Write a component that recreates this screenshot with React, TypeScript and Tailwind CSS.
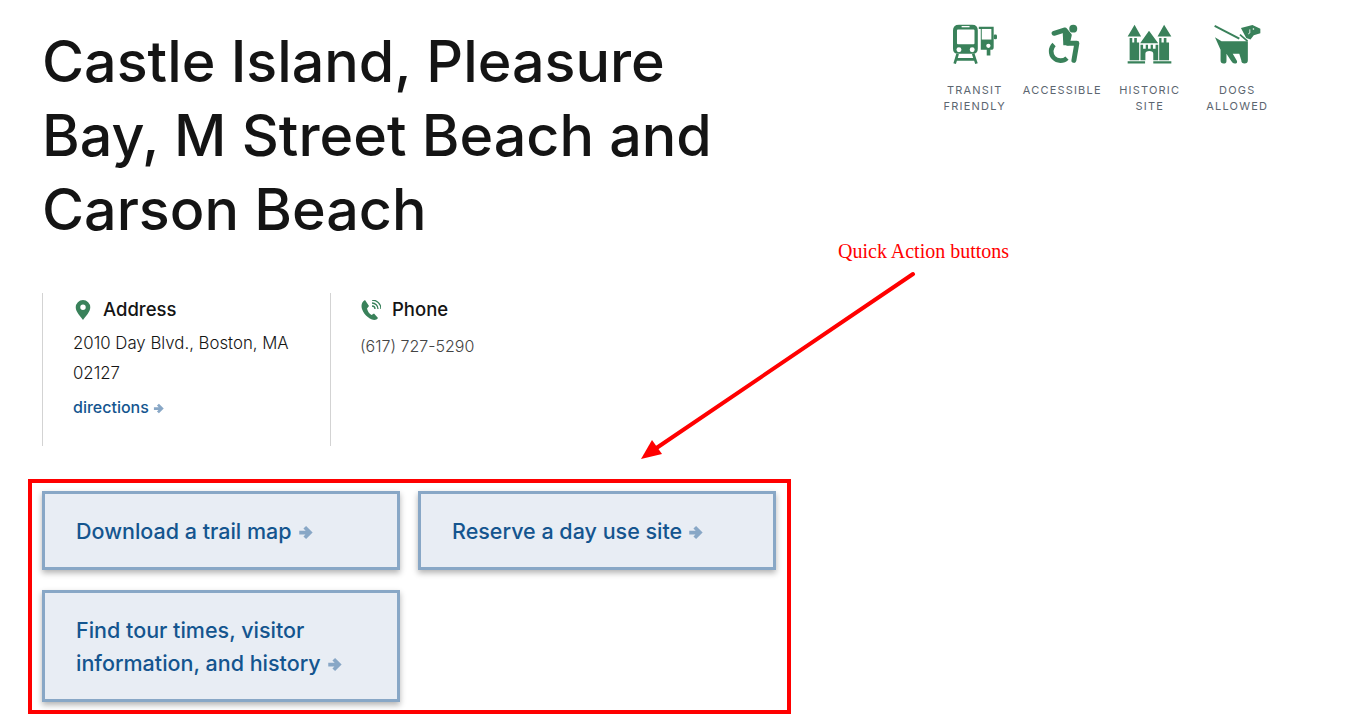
import React from "react";

const Arrow = ({ className = "" }: { className?: string }) => (
  <svg viewBox="0 0 12 12" className={className} aria-hidden="true">
    <path d="M1 6h8M5.400 1.800 9.600 6l-4.200 4.200" fill="none" stroke="#88a7c6" strokeWidth="3" />
  </svg>
);

const Transit = () => (
  <svg viewBox="65 40 140 124" className="w-[47px] h-[41px]" fill="#39815a" aria-hidden="true">
    <path fillRule="evenodd" d="M88 42h40q17 0 17 17v56q0 15-15 15H85q-15 0-15-15V59q0-17 18-17ZM82 60v38q0 3 3 3h47q3 0 3-3V60q0-3-3-3H85q-3 0-3 3Z" />
    <rect x="96" y="46" width="24" height="4" fill="#fff" />
    <circle cx="88" cy="118" r="7.5" fill="#fff" />
    <circle cx="128" cy="118" r="7.5" fill="#fff" />
    <path d="M84 130 75 160M131 130l10 30M80 147h56" stroke="#39815a" strokeWidth="8" fill="none" />
    <path d="M148 48h45v62q0 8-8 8h-2v17h-11v-17h-18V55h-6Z" />
    <path d="M157 55h29v32h-29Z" fill="#fff" />
    <circle cx="177" cy="106" r="6.5" fill="#fff" />
    <rect x="193" y="72" width="10" height="14" rx="4" />
  </svg>
);

const Accessible = () => (
  <svg viewBox="345 40 105 124" className="w-[35px] h-[41px]" aria-hidden="true">
    <circle cx="430" cy="54" r="12" fill="#39815a" />
    <path d="M372 68 405 58 418 74 412 98H441L432 150" fill="none" stroke="#39815a" strokeWidth="15" strokeLinejoin="round" strokeLinecap="round" />
    <path d="M398 62 424 72 417 104H400Z" fill="#39815a" />
    <path d="M372 102A28 28 0 1 0 411 143" fill="none" stroke="#39815a" strokeWidth="14" />
  </svg>
);

const Castle = () => (
  <svg viewBox="595 40 137 124" className="w-[45px] h-[41px]" fill="#39815a" aria-hidden="true">
    <path d="M618 42 638 78H597ZM708 42 730 78H688ZM662 60 690 98H635Z" />
    <path d="M603 82h8v14h6V82h8v14h7v54h-29ZM693 96V82h7v14h7V82h8v14h8v54h-30Z" />
    <path fillRule="evenodd" d="M636 103h8v12h8v-12h7v12h8v-12h7v12h8v-12h8v47h-15v-20q0-8-12-8t-12 8v20h-15Z" />
    <path d="M597 153h53v7h-53ZM675 153h55v7h-55Z" />
  </svg>
);

const Dog = () => (
  <svg viewBox="852 40 146 124" className="w-[48px] h-[41px]" fill="#39815a" aria-hidden="true">
    <path d="M857 45 932 84" stroke="#39815a" strokeWidth="6" />
    <path d="M858 80 878 92H958V150Q958 160 948 160Q938 160 938 150L932 130H912L925 152Q927 160 918 160Q912 160 908 153L893 130V152Q893 160 884 160Q875 160 875 150V118Z" />
    <path d="M937 52 972 43 996 54V68L976 74 966 87 953 82Z" />
    <path d="M934 72 957 92" stroke="#39815a" strokeWidth="5" />
    <path d="M964 56v11l-5 3" stroke="#fff" strokeWidth="2.5" fill="none" />
    <circle cx="975" cy="55" r="2.5" fill="#fff" />
  </svg>
);

const amenities = [
  { icon: <Transit />, label: ["TRANSIT", "FRIENDLY"] },
  { icon: <Accessible />, label: ["ACCESSIBLE"] },
  { icon: <Castle />, label: ["HISTORIC", "SITE"] },
  { icon: <Dog />, label: ["DOGS", "ALLOWED"] },
];

const Action = ({ lines }: { lines: string[] }) => (
  <a className="flex flex-col justify-center border-[3px] border-[#88a7c6] bg-[#e8edf4] pl-[31px] pr-4 pt-[21px] pb-[19px] shadow-[0_3px_6px_rgba(0,0,0,0.3)] text-[21.5px] leading-[33px] font-medium text-[#14558f] self-start w-[358px]">
    {lines.map((l, i) => (
      <span key={l} className="whitespace-nowrap">
        {l}
        {i === lines.length - 1 && <Arrow className="inline-block w-[15px] h-[15px] ml-[6px] align-[-1px]" />}
      </span>
    ))}
  </a>
);

export default function App() {
  return (
    <div className="relative flex h-[725px] w-[1367px] overflow-hidden bg-white font-['Inter',sans-serif] text-[#141414]">
      <main className="w-[790px] pl-[42px] pt-[24px]">
        <h1 className="text-[57.4px] leading-[74px] font-medium">
          Castle Island, Pleasure<br />Bay, M Street Beach and<br />Carson Beach
        </h1>
        <div className="mt-[47px] flex h-[153px]">
          <section className="w-[288px] border-l border-[#d3d3d3] pl-[30px] pr-4">
            <div className="flex items-center gap-[12px] pt-[3px] h-[30px] text-[18.5px] font-medium">
              <svg viewBox="0 0 16 22" className="ml-[2px] w-[16px] h-[20px]" aria-hidden="true">
                <path fillRule="evenodd" d="M8 0a8 8 0 0 1 8 8c0 5-5 10-8 14-3-4-8-9-8-14a8 8 0 0 1 8-8Zm0 5a3 3 0 1 0 0 6 3 3 0 0 0 0-6Z" fill="#39815a" />
              </svg>
              Address
            </div>
            <p className="mt-[5px] text-[16.8px] leading-[30px] font-light">2010 Day Blvd., Boston, MA<br />02127</p>
            <a className="mt-[4px] block text-[16px] leading-[30px] font-medium text-[#14558f]">
              directions <Arrow className="inline-block w-[11px] h-[11px]" />
            </a>
          </section>
          <section className="border-l border-[#d3d3d3] pl-[29px]">
            <div className="flex items-center gap-[11px] pt-[3px] h-[30px] text-[18.5px] font-medium">
              <svg viewBox="0 0 20 20" className="ml-[1px] w-[20px] h-[20px]" aria-hidden="true">
                <path d="M4 0 8 6 6 8.500c.5 2.500 2 5 4.500 6.500L13 13.500l4 4.500c-1 2-4 2.500-6 1.500C5 17 .5 11 .5 6 .5 3 2 1 4 0Z" fill="#39815a" />
                <path d="M11 6a3 3 0 0 1 3 3M11 3a6 6 0 0 1 6 6M11 0a9 9 0 0 1 9 9" fill="none" stroke="#39815a" strokeWidth="1.300" />
              </svg>
              Phone
            </div>
            <p className="mt-[8px] text-[16px] leading-[30px] font-light text-[#444]">(617) 727-5290</p>
          </section>
        </div>
        <div className="mt-[45px] grid grid-cols-[358px_358px] gap-x-[18px] gap-y-[20px]">
          <Action lines={["Download a trail map"]} />
          <Action lines={["Reserve a day use site"]} />
          <Action lines={["Find tour times, visitor", "information, and history"]} />
        </div>
      </main>
      <aside className="flex ml-[141px] pt-[24px] h-fit">
        {amenities.map((a) => (
          <div key={a.label[0]} className="w-[87.5px] flex flex-col items-center">
            {a.icon}
            <div className="mt-[17px] text-center text-[11px] leading-[16px] tracking-[1.200px] text-[#5c6670] whitespace-nowrap">
              {a.label.map((l) => <div key={l}>{l}</div>)}
            </div>
          </div>
        ))}
      </aside>
      <div className="absolute left-[28px] top-[479px] w-[763px] h-[235px] border-4 border-[#ff0000] pointer-events-none" />
      <div className="absolute left-[838px] top-[239px] font-['Liberation_Serif',serif] text-[20px] leading-[24px] text-[#ff0000]">Quick Action buttons</div>
      <svg className="absolute left-[630px] top-[265px] w-[300px] h-[205px]" viewBox="630 265 300 205" aria-hidden="true">
        <path d="M913 274 655 449" stroke="#ff0000" strokeWidth="4" strokeLinecap="round" fill="none" />
        <path d="M641 459 652 440 662 454Z" fill="#ff0000" />
      </svg>
    </div>
  );
}
